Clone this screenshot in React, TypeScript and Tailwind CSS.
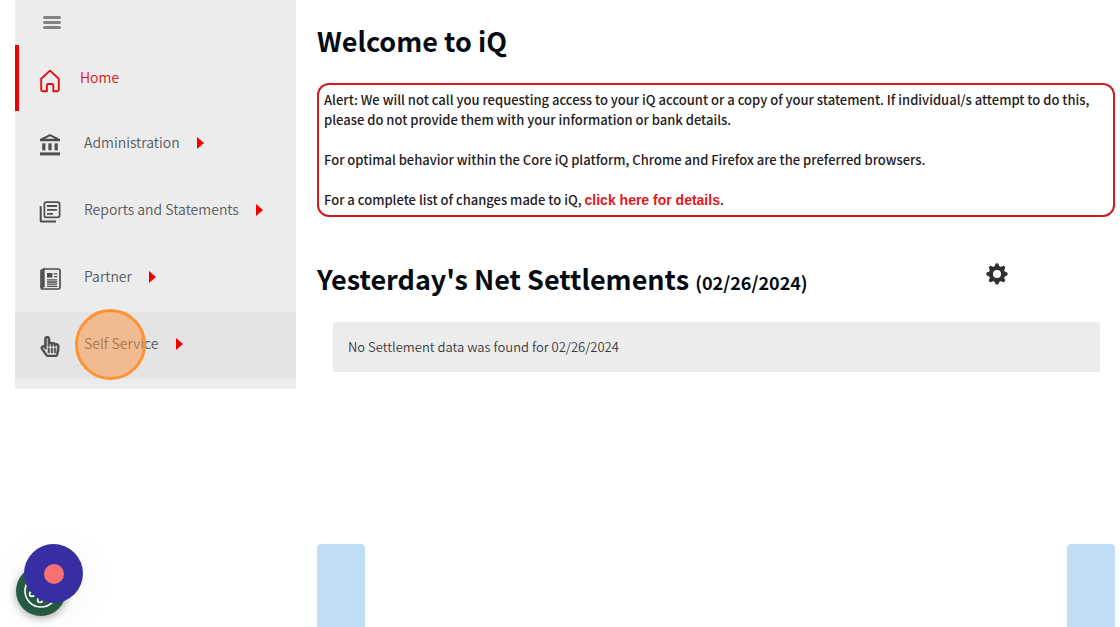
import { useState } from 'react'
import type { ReactNode } from 'react'
import { FaRegHandPointer } from 'react-icons/fa'

interface NavItem {
  label: string
  icon: ReactNode
}

function HomeIcon() {
  return (
    <svg viewBox="0 0 22 24" className="h-6 w-[22px]" fill="none" stroke="currentColor" strokeWidth="1.9" strokeLinejoin="round">
      <path d="M11 1.6 L19.8 9.8 V20.8 Q19.8 22.2 18.4 22.2 H14.3 V16.6 Q14.3 15 12.7 15 H9.5 Q7.9 15 7.9 16.6 V22.2 H3.6 Q2.2 22.2 2.2 20.8 V9.8 Z" />
    </svg>
  )
}

function BankIcon() {
  return (
    <svg viewBox="0 0 22 24" className="h-6 w-[22px]" fill="currentColor">
      <path fillRule="evenodd" d="M11 1 L21 6 V8.2 H1 V6 Z M11 3.2 L6 5.8 H16 Z" />
      <rect x="3.2" y="10.3" width="3.2" height="7" />
      <rect x="9.4" y="10.3" width="3.2" height="7" />
      <rect x="15.6" y="10.3" width="3.2" height="7" />
      <rect x="1" y="19.4" width="20" height="3" />
    </svg>
  )
}

function ReportsIcon() {
  return (
    <svg viewBox="0 0 22 24" className="h-6 w-[22px]" fill="none" stroke="currentColor">
      <rect x="5.4" y="2.2" width="15.2" height="15.2" rx="1.8" strokeWidth="1.7" />
      <path d="M1.7 6.2 V20.4 Q1.7 21.6 2.9 21.6 H17" strokeWidth="2" />
      <path d="M8 6 H18 M8 9.8 H18 M8 13.8 H14" strokeWidth="1.8" />
    </svg>
  )
}

function PartnerIcon() {
  return (
    <svg viewBox="0 0 22 24" className="h-6 w-[22px]" fill="none" stroke="currentColor">
      <path d="M4.8 2 H19.4 Q21 2 21 3.8 V20.4 Q21 22 19.4 22 H4 Q2 22 2 20 V3.6 L4.8 2 V20.5" strokeWidth="1.7" />
      <path d="M3.3 3.6 V21" strokeWidth="1.4" />
      <rect x="8" y="6" width="5.4" height="4.6" fill="currentColor" stroke="none" />
      <path d="M14.6 6.8 H18.2 M15 9.6 H18.2 M8 12.8 H18.2 M8 15 H18.2 M8 17.2 H18.2 M8 19.4 H18.2" strokeWidth="1.3" />
    </svg>
  )
}

function GearIcon() {
  return (
    <svg viewBox="0 0 22 22" className="size-[22px]" fill="#2f3032">
      {[0, 45, 90, 135, 180, 225, 270, 315].map((angle) => (
        <path key={angle} d="M7.6 4.5 Q9.2 3 9.3 1.4 Q9.5 0.3 11 0.3 Q12.5 0.3 12.7 1.4 Q12.8 3 14.4 4.5 Z" transform={`rotate(${angle} 11 11)`} />
      ))}
      <path fillRule="evenodd" d="M11 3 A8 8 0 1 1 11 19 A8 8 0 1 1 11 3 Z M11 7 A4 4 0 1 0 11 15 A4 4 0 1 0 11 7 Z" />
    </svg>
  )
}

function CookieIcon() {
  return (
    <svg viewBox="0 0 50 50" className="size-[50px]" fill="none" stroke="#ffffff" strokeWidth="1.6">
      <circle cx="25" cy="25" r="16" />
      <circle cx="16" cy="28" r="2.4" />
      <circle cx="24" cy="34" r="2.4" />
      <circle cx="32" cy="22" r="2.4" />
    </svg>
  )
}

const navItems: NavItem[] = [
  { label: 'Home', icon: <HomeIcon /> },
  { label: 'Administration', icon: <BankIcon /> },
  { label: 'Reports and Statements', icon: <ReportsIcon /> },
  { label: 'Partner', icon: <PartnerIcon /> },
  { label: 'Self Service', icon: <FaRegHandPointer className="h-[21px] w-[22px]" stroke="currentColor" strokeWidth="14" /> },
]

function Sidebar() {
  const [active, setActive] = useState('Home')

  return (
    <nav className="w-[281px] shrink-0 self-start bg-[#ececec] pb-[10px]">
      <div className="flex h-[45px] items-center pl-7">
        <button type="button" aria-label="Toggle menu" className="flex w-[18px] flex-col gap-[2px]">
          <span className="h-[3px] rounded-full bg-[#838383]" />
          <span className="h-[3px] rounded-full bg-[#838383]" />
          <span className="h-[3px] rounded-full bg-[#838383]" />
        </button>
      </div>
      <ul>
        {navItems.map((item) => {
          const isActive = item.label === active
          return (
            <li key={item.label} className={item.label === 'Self Service' ? 'relative bg-[#e4e4e4]' : ''}>
              <a
                href="#"
                onClick={() => setActive(item.label)}
                className={
                  isActive
                    ? 'flex h-[66px] items-center border-l-4 border-[#f20000] pl-5 text-[#e00f14]'
                    : 'flex h-[67px] items-center pb-[3px] pl-6 text-[#58595b]'
                }
              >
                <span className={isActive ? 'mr-[19px] pt-[5px]' : 'mr-[23px] pt-1 text-[#4d4e50]'}>{item.icon}</span>
                <span className="pb-[3px] text-sm font-[350]">{item.label}</span>
                {!isActive && (
                  <span className="ml-[17px] border-y-[6px] border-l-[7px] border-y-transparent border-l-[#f20000]" />
                )}
              </a>
              {item.label === 'Self Service' && (
                <span className="pointer-events-none absolute -top-[3px] left-[60px] size-[71px] rounded-full border-[3px] border-[#ff9233] bg-[#fb923c]/50" />
              )}
            </li>
          )
        })}
      </ul>
    </nav>
  )
}

function App() {
  return (
    <div className="flex min-h-screen gap-[21px] bg-white pr-[5px] pl-[15px] font-['Noto_Sans_CJK_SC',sans-serif]">
      <Sidebar />

      <main className="flex min-w-0 flex-1 flex-col">
        <h1 className="mt-[23px] text-[27px] leading-9 font-bold text-[#050b12]">Welcome to iQ</h1>

        {/* Alert */}
        <section className="mt-6 space-y-5 rounded-xl border-2 border-[#d01c20] p-[5px] text-[13px] leading-5 font-medium text-[#1f2022]">
          <p>
            Alert: We will not call you requesting access to your iQ account or a copy of your statement. If individual/s
            attempt to do this, please do not provide them with your information or bank details.
          </p>
          <p>For optimal behavior within the Core iQ platform, Chrome and Firefox are the preferred browsers.</p>
          <p>
            For a complete list of changes made to iQ,{' '}
            <a href="#" className="font-['Liberation_Sans',sans-serif] text-sm font-bold text-[#e0191e]">
              click here for details
            </a>
            .
          </p>
        </section>

        {/* Settlements */}
        <div className="mt-11 flex items-start justify-between pr-[107px]">
          <h2 className="text-[27px] leading-9 font-bold text-[#050b12]">
            Yesterday's Net Settlements <small className="text-lg">(02/26/2024)</small>
          </h2>
          <button type="button" aria-label="Settings" className="mt-[2px]">
            <GearIcon />
          </button>
        </div>
        <p className="mt-[25px] mr-[15px] ml-4 bg-[#ececec] p-[15px] text-[13px] leading-5 font-[350] text-[#3a3b3d]">
          No Settlement data was found for 02/26/2024
        </p>

        <div className="mt-auto flex justify-between">
          <div className="h-[83px] w-12 rounded-t bg-[#bfdef5]" />
          <div className="h-[83px] w-12 rounded-t bg-[#bfdef5]" />
        </div>
      </main>

      {/* Floating widgets */}
      <button
        type="button"
        aria-label="Cookie settings"
        className="fixed bottom-[11px] left-4 size-[50px] rounded-full bg-[#265c42] shadow-[0_2px_8px_rgba(0,0,0,0.35)]"
      >
        <CookieIcon />
      </button>
      <button
        type="button"
        aria-label="Record"
        className="fixed bottom-6 left-6 flex size-[59px] items-center justify-center rounded-full bg-[#372ea3] shadow-[0_8px_40px_rgba(0,0,0,0.05)]"
      >
        <span className="size-5 rounded-full bg-[#f87171]" />
      </button>
    </div>
  )
}

export default App
